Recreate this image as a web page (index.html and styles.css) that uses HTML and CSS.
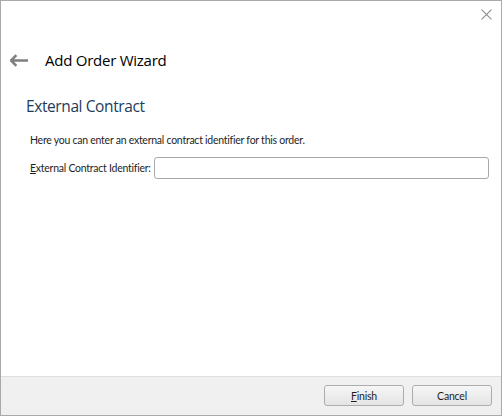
FILE: index.html
```html
<!DOCTYPE html>
<html lang="en">
<head>
  <meta charset="UTF-8">
  <title>Add Order Wizard</title>
  <link rel="stylesheet" href="styles.css">
</head>
<body>

  <div class="window">
    <div class="titlebar">
      <button class="close" title="Close">
        <svg viewBox="0 0 10 10"><path d="M0.5 0.5 L9.5 9.5 M9.5 0.5 L0.5 9.5"/></svg>
      </button>
    </div>

    <header class="wizard-head">
      <button class="back" title="Back">
        <svg viewBox="0 0 17 12"><path d="M6 1 L1 6 L6 11 M1.5 6 H17"/></svg>
      </button>
      <h1 class="wizard-title">Add Order Wizard</h1>
    </header>

    <main class="page">
      <h2 class="page-title">External Contract</h2>
      <p class="page-desc">Here you can enter an external contract identifier for this order.</p>
      <div class="field">
        <label for="contract"><u>E</u>xternal Contract Identifier:</label>
        <input type="text" id="contract">
      </div>
    </main>

    <footer class="buttons">
      <button class="btn"><u>F</u>inish</button>
      <button class="btn">Cancel</button>
    </footer>
  </div>

</body>
</html>
```

FILE: styles.css
```css
:root {
  --border: #a9a9a9;
  --text: #1e1e1e;
  --head: #1e3b5a;
  --footer: #f0f0f0;
  --small: Lato, "Open Sans", sans-serif;
}
* { box-sizing: border-box; margin: 0; padding: 0; }
body {
  background: #fff;
  font-family: "Open Sans", "Noto Sans", sans-serif;
  color: var(--text);
}
button { font: inherit; color: inherit; }

.window {
  display: flex;
  flex-direction: column;
  width: 502px;
  height: 416px;
  border: 1px solid var(--border);
  background: #fff;
}

.titlebar {
  display: flex;
  justify-content: flex-end;
  height: 29px;
  padding: 8px 9px 0 0;
}
.close {
  width: 11px;
  height: 11px;
  border: 0;
  background: none;
}
.close svg {
  display: block;
  width: 11px;
  height: 11px;
  stroke: #8a8a8a;
  stroke-width: 1;
  fill: none;
}

.wizard-head {
  display: flex;
  align-items: center;
  height: 20px;
  padding-left: 9px;
  margin-top: 20px;
}
.back {
  width: 18px;
  height: 13px;
  border: 0;
  background: none;
}
.back svg {
  display: block;
  width: 18px;
  height: 13px;
  stroke: #808080;
  stroke-width: 2.4;
  fill: none;
}
.wizard-title {
  margin-left: 17px;
  font-size: 15px;
  font-weight: normal;
  color: #000;
  letter-spacing: -0.25px;
}

.page {
  flex: 1;
  padding: 0 12px 0 25px;
}
.page-title {
  margin-top: 25px;
  font-size: 15.5px;
  font-weight: normal;
  color: var(--head);
  letter-spacing: -0.4px;
}
.page-desc {
  margin: 17px 0 0 4px;
  font-family: var(--small);
  font-size: 10.5px;
  letter-spacing: -0.25px;
}
.field {
  display: flex;
  align-items: center;
  gap: 3px;
  margin: 11px 0 0 4px;
}
.field label {
  font-family: var(--small);
  font-size: 10.5px;
  letter-spacing: -0.25px;
  white-space: nowrap;
}
.field input {
  flex: 1;
  height: 22px;
  border: 1px solid var(--border);
  border-radius: 3px;
  outline: none;
}

.buttons {
  display: flex;
  justify-content: flex-end;
  gap: 8px;
  height: 39px;
  padding: 8px 9px 0 0;
  background: var(--footer);
  border-top: 1px solid #dfdfdf;
}
.btn {
  width: 80px;
  height: 21px;
  border: 1px solid #adadad;
  border-radius: 3px;
  background: linear-gradient(#f6f6f6, #e4e4e4);
  font-family: var(--small);
  font-size: 10.5px;
  letter-spacing: -0.2px;
}
```
